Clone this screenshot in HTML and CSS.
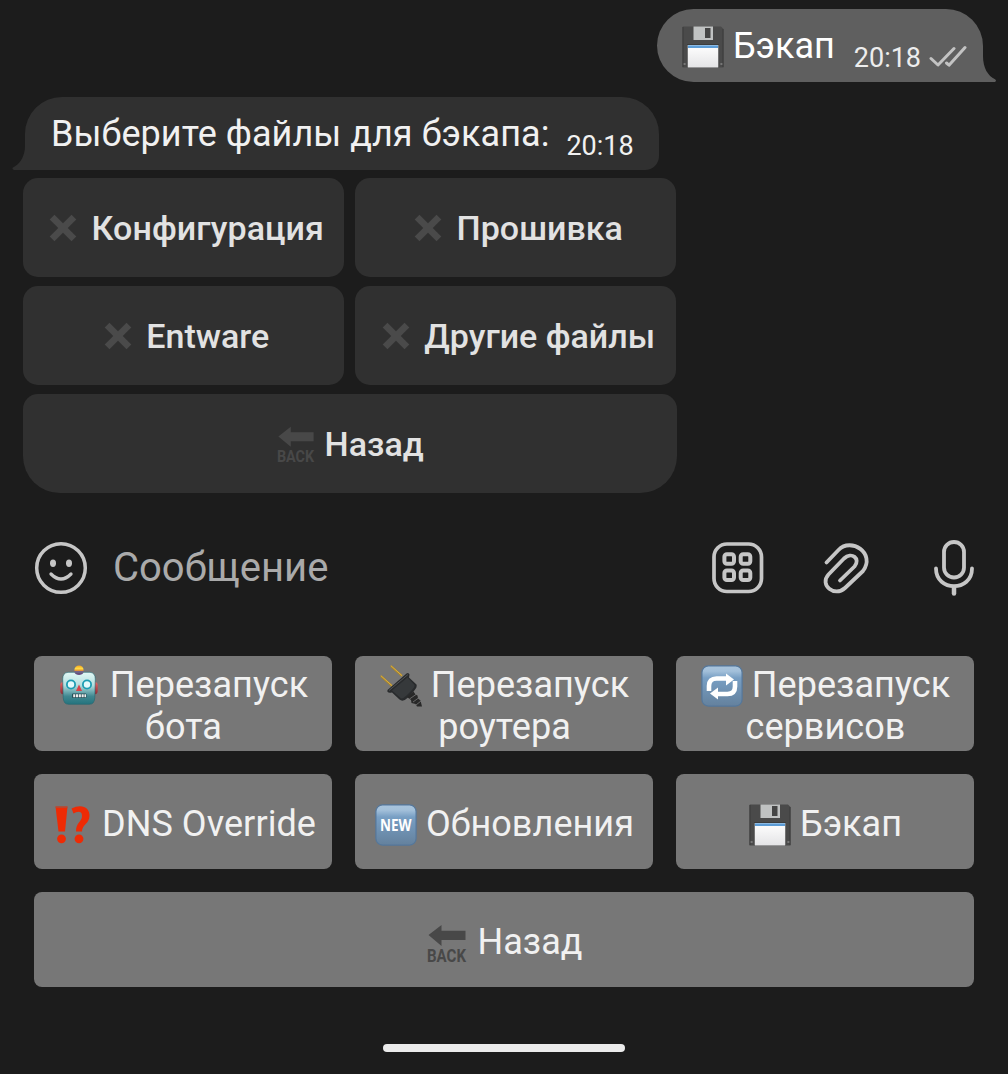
FILE: index.html
```html
<!DOCTYPE html>
<html lang="ru">
<head>
<meta charset="utf-8">
<title>Бэкап</title>
<link rel="stylesheet" href="styles.css">
</head>
<body>
<svg class="defs" aria-hidden="true">
  <defs>
    <linearGradient id="tile" x1="0" y1="0" x2="0" y2="1"><stop offset="0" stop-color="#a9c4dc"/><stop offset=".13" stop-color="#a3c0da"/><stop offset=".3" stop-color="#789fc4"/><stop offset="1" stop-color="#64819d"/></linearGradient>
    <linearGradient id="paper" x1="0" y1="0" x2="0" y2="1"><stop offset="0" stop-color="#fff"/><stop offset="1" stop-color="#e4e4e6"/></linearGradient>
    <linearGradient id="face" x1="0" y1="0" x2="0" y2="1"><stop offset="0" stop-color="#e2f8f5"/><stop offset=".4" stop-color="#b5dfdf"/><stop offset=".75" stop-color="#3f8790"/><stop offset="1" stop-color="#25737d"/></linearGradient>
    <linearGradient id="bulb" x1="0" y1="0" x2="0" y2="1"><stop offset="0" stop-color="#f5a31c"/><stop offset=".35" stop-color="#ffdc45"/><stop offset=".55" stop-color="#e99a30"/><stop offset=".6" stop-color="#8b668e"/><stop offset="1" stop-color="#66507c"/></linearGradient>
    <linearGradient id="ear" x1="0" y1="0" x2="0" y2="1"><stop offset="0" stop-color="#e86463"/><stop offset="1" stop-color="#8d2934"/></linearGradient>
  </defs>
  <symbol id="floppy" viewBox="0 0 42 42">
    <path d="M1 .5H39L41.500 3V41.500H.5V1Z" fill="#4a4a4a"/>
    <path d="M1 1V41M41 3V41" stroke="#3b3b3b"/>
    <path d="M11.500 .5H31V14H11.500Z" fill="#c0c2c2"/>
    <path d="M23 2H28.500V12H23Z" fill="#444"/>
    <path d="M5 18H37V41.500H5Z" fill="#3c3c3c"/>
    <path d="M5.700 19H36.300V41.500H5.700Z" fill="url(#paper)"/>
    <path d="M6 19.300H36V22H6Z" fill="#5c9cd6"/>
    <path d="M1.600 37H3.600V39H1.600ZM38.400 37H40.400V39H38.400Z" fill="#777"/>
  </symbol>
  <symbol id="cross" viewBox="0 0 42 42">
    <path d="M12 7 21 16 30 7 35 12 26 21 35 30 30 35 21 26 12 35 7 30 16 21 7 12Z" fill="#4a4a4a"/>
  </symbol>
  <symbol id="robot" viewBox="0 0 42 42">
    <path d="M1.300 19Q2 17 4.500 17V29.500Q1.300 29 1.300 26ZM38.700 19Q38 17 35.500 17V29.500Q38.700 29 38.700 26Z" fill="url(#ear)"/>
    <circle cx="20" cy="5" r="4.600" fill="url(#bulb)"/>
    <path d="M9 7.300H31Q36.300 7.800 36.300 14L35.800 32.500Q35.500 39.300 30.500 39.300H9.500Q4.500 39.300 4.200 32.500L3.700 14Q3.700 7.800 9 7.300Z" fill="url(#face)" stroke="#236771" stroke-width=".6"/>
    <path d="M15.400 7.300H24.600Q23.500 10 20 10T15.400 7.300Z" fill="#66507c"/>
    <circle cx="12" cy="19.500" r="5" fill="#1c9db3"/><circle cx="28" cy="19.500" r="5" fill="#1c9db3"/>
    <circle cx="12" cy="19.500" r="3.200" fill="#e4fafc"/><circle cx="28" cy="19.500" r="3.200" fill="#e4fafc"/>
    <path d="M20 19.500 23 26H17Z" fill="#d8424b"/>
    <rect x="13" y="28.500" width="14.500" height="4.500" rx="1" fill="#244d54"/>
    <path d="M14.200 30.700H27" stroke="#eee" stroke-width="3" stroke-dasharray="2.100 .7"/>
  </symbol>
  <symbol id="plug" viewBox="0 0 42 42">
    <path d="M.8 11 12 21M10.800 1 22 11" stroke="#a8852e" stroke-width="2.200" fill="none"/>
    <path d="M.8 10.600 12 20.600M10.800 .6 22 10.600" stroke="#dfb445" stroke-width=".9" fill="none"/>
    <path d="M26.500 8.500Q28.500 7 29.500 9.500L29 12.500 36.500 19.500Q37.500 22 34 26L28 32.500Q23 37.500 19.500 34.500L12 27.500Q6.500 28.500 7.500 25Z" fill="#292b2d"/>
    <path d="M12 25.500 27.500 12.500 34.500 20Q35 22 31.500 25.500L26.500 30.500Q22 35 20 32.500Z" fill="#36393b"/>
    <path d="M9 25.500 28 9.500" stroke="#505355" stroke-width="1"/>
    <path d="M27 32 33.500 26.500 35.500 29.500 37.500 30.500 38 33.500 40.500 35.500 42 41.500H37L35.500 39 31.500 38 31 35Z" fill="#282828"/>
    <path d="M29.500 34 36 29.500M33 37 38.500 33M36 40 41 36" stroke="#777" stroke-width=".8"/>
  </symbol>
  <symbol id="repeat" viewBox="0 0 42 42">
    <rect x=".9" y=".9" width="40.200" height="40.200" rx="6.500" fill="url(#tile)" stroke="#54779b" stroke-width="1.200"/>
    <path d="M8 26V21Q8 13.500 15.500 13.500H27" fill="none" stroke="#fff" stroke-width="4.600"/>
    <path d="M34 16V21.500Q34 29 26.500 29H15" fill="none" stroke="#fff" stroke-width="4.600"/>
    <path d="M25 8.500 33 14.500 25 20.500ZM17 22.500 9 28.500 17 34.500Z" fill="#fff"/>
  </symbol>
  <symbol id="interrobang" viewBox="0 0 42 42">
    <path d="M4.500 2.500H16.500L14 27.500H7.500Z" fill="#ee2b05"/>
    <path d="M4.500 2.500H16.500L16.400 3.800H4.600Z" fill="#a8503f"/>
    <circle cx="10.500" cy="34.800" r="4.400" fill="#ee2b05"/>
    <path d="M20.500 4.500Q25 2.200 29 2.200C35 2.200 38.500 6 38.500 11.500 38.500 20 31 20.500 31 27.500H25C25 18 31 18 31 12Q31 7.800 27.500 7.800 25 7.800 22.500 9.500Z" fill="#ee2b05"/>
    <circle cx="28" cy="34.800" r="4.400" fill="#ee2b05"/>
  </symbol>
</svg>

<main class="chat">
  <div class="message message-out">
    <svg class="bubble" width="340" height="73" viewBox="0 0 340 73"><path d="M37 0H290A37 37 0 0 1 327 37V47C327 59 332 67 339 70.200Q341 71.500 339 73H37.500A36.500 36.500 0 0 1 37.500 0Z" fill="#5f5f5f"/></svg>
    <span class="text"><svg class="emoji"><use href="#floppy"/></svg> Бэкап</span>
    <span class="time">20:18</span>
    <svg class="checks" width="38" height="24" viewBox="0 0 38 24"><path d="M2 13.500 9 20 25 3.500M17.500 18 20 20.200 36 2.500" fill="none" stroke="#c3c3c3" stroke-width="3" stroke-linecap="round" stroke-linejoin="round"/></svg>
  </div>
  <div class="message message-in">
    <svg class="bubble" width="648" height="73" viewBox="0 0 648 73"><path d="M50 0H610A37 37 0 0 1 647 37V59A14 14 0 0 1 633 73H2Q-.8 71.500 1.500 70.200C8 67 13 59 13 49V37A37 37 0 0 1 50 0Z" fill="#303030"/></svg>
    <span class="text">Выберите файлы для бэкапа:</span>
    <span class="time">20:18</span>
  </div>
  <div class="actions">
    <div class="action action-tight"><span><svg class="emoji"><use href="#cross"/></svg> Конфигурация</span></div>
    <div class="action"><span><svg class="emoji"><use href="#cross"/></svg> Прошивка</span></div>
    <div class="action"><span><svg class="emoji"><use href="#cross"/></svg> Entware</span></div>
    <div class="action"><span><svg class="emoji"><use href="#cross"/></svg> Другие файлы</span></div>
    <div class="action action-wide"><span><svg class="emoji" viewBox="0 0 42 42"><path d="M2.500 13 15.500 3V8.700H39.500V18H15.500V24Z" fill="#484848"/><text x="1" y="39.800" textLength="39" lengthAdjust="spacingAndGlyphs" class="back-word">BACK</text></svg> Назад</span></div>
  </div>
</main>

<div class="composer">
  <svg width="54" height="54" viewBox="0 0 54 54"><circle cx="27" cy="27" r="24.300" fill="none" stroke="#c6c6c6" stroke-width="3.500"/><ellipse cx="19" cy="22.300" rx="3" ry="3.700" fill="#c6c6c6"/><ellipse cx="35" cy="22.300" rx="3" ry="3.700" fill="#c6c6c6"/><path d="M17 33Q27 43 37 33" fill="none" stroke="#c6c6c6" stroke-width="3.300" stroke-linecap="round"/></svg>
  <span class="placeholder">Сообщение</span>
  <svg class="commands" width="52" height="52" viewBox="0 0 52 52" fill="none" stroke="#c6c6c6"><rect x="2" y="2" width="47.500" height="47.500" rx="13" stroke-width="3.700"/><g stroke-width="4"><rect x="12.400" y="12.200" width="9.600" height="9.600" rx="2.500"/><rect x="28.700" y="12.200" width="9.600" height="9.600" rx="2.500"/><rect x="12.400" y="28.500" width="9.600" height="9.600" rx="2.500"/><rect x="28.700" y="28.500" width="9.600" height="9.600" rx="2.500"/></g></svg>
  <svg class="attach" width="48" height="54" viewBox="0 0 48 54"><path d="M3.500 21.500 15.500 9C28 -4 53 12 40 30L22 47C11.500 56.500 -4 44 5.500 33.500L21 17.500C28.500 10.500 38 17.500 31.500 25.500L17 39.500" fill="none" stroke="#c6c6c6" stroke-width="3.800" stroke-linecap="round" stroke-linejoin="round"/></svg>
  <svg class="mic" width="42" height="58" viewBox="0 0 42 58" fill="none" stroke="#c6c6c6" stroke-width="3.800" stroke-linecap="round"><rect x="11" y="3" width="20" height="35.500" rx="10"/><path d="M3 29.500C3 53 39 53 39 29.500"/><path d="M21 48V54.500" stroke-width="4.500"/></svg>
</div>

<div class="keyboard">
  <div class="key"><span><svg class="emoji"><use href="#robot"/></svg> Перезапуск<br>бота</span></div>
  <div class="key"><span><svg class="emoji"><use href="#plug"/></svg> Перезапуск<br>роутера</span></div>
  <div class="key"><span><svg class="emoji"><use href="#repeat"/></svg> Перезапуск<br>сервисов</span></div>
  <div class="key"><span><svg class="emoji"><use href="#interrobang"/></svg> DNS Override</span></div>
  <div class="key"><span><svg class="emoji" viewBox="0 0 42 42"><rect x=".9" y=".9" width="40.200" height="40.200" rx="6.500" fill="url(#tile)" stroke="#54779b" stroke-width="1.200"/><text x="5" y="27.200" textLength="31.500" lengthAdjust="spacingAndGlyphs" class="new-word">NEW</text></svg> Обновления</span></div>
  <div class="key"><span><svg class="emoji"><use href="#floppy"/></svg> Бэкап</span></div>
  <div class="key key-wide"><span><svg class="emoji" viewBox="0 0 42 42"><path d="M2.500 13 15.500 3V8.700H39.500V18H15.500V24Z" fill="#484848"/><text x="1" y="39.800" textLength="39" lengthAdjust="spacingAndGlyphs" class="back-word">BACK</text></svg> Назад</span></div>
</div>
<div class="home-bar"></div>
</body>
</html>
```
FILE: styles.css
```css
* {
  box-sizing: border-box;
}

body {
  margin: 0;
  height: 1074px;
  display: flex;
  flex-direction: column;
  overflow: hidden;
  background: #1c1c1c;
  color: #f1f1f1;
  font: 36px/42px Roboto, sans-serif;
}

.defs {
  position: absolute;
  width: 0;
  height: 0;
}

.back-word {
  font: bold 18px Roboto, sans-serif;
  letter-spacing: 0;
  fill: #484848;
}

.new-word {
  font: bold 16px "Open Sans", sans-serif;
  letter-spacing: 0;
  fill: #fff;
}

.emoji {
  width: 42px;
  height: 42px;
  margin-bottom: -2px;
  vertical-align: -8px;
  overflow: visible;
}

.chat {
  display: flex;
  flex-direction: column;
  padding-top: 9px;
}

.message {
  position: relative;
  display: flex;
  height: 73px;
  white-space: nowrap;
}

.bubble {
  position: absolute;
  left: 0;
  top: 0;
  z-index: -1;
}

.message-out {
  align-self: flex-end;
  width: 340px;
  margin-right: 12px;
  padding: 16px 0 0 26px;
  color: #fff;
}

.message-in {
  width: 648px;
  margin: 15px 0 8px 12px;
  padding: 16px 0 0 39px;
}

.message-in .text {
  letter-spacing: .05px;
}

.time {
  font-size: 27px;
  line-height: 30px;
  margin-top: 18px;
}

.message-out .time {
  margin-left: 19px;
  color: #ededed;
}

.message-in .time {
  margin-left: 17px;
}

.checks {
  margin: 20px 0 0 8px;
}

.actions {
  display: grid;
  grid-template-columns: 321px 321px;
  grid-auto-rows: 99px;
  gap: 9px 11px;
  margin-left: 23px;
}

.action {
  display: flex;
  align-items: center;
  justify-content: center;
  border-radius: 15px;
  background: #303030;
  color: #e2e2e2;
  font-size: 34px;
  font-weight: 500;
  white-space: nowrap;
}

.action .emoji {
  width: 40px;
  height: 40px;
  margin: -2px 0 0;
  vertical-align: -8px;
}

.action-tight {
  letter-spacing: .1px;
}

.action-wide {
  grid-column: 1 / 3;
  width: 654px;
  border-radius: 15px 15px 37px 37px;
}

.composer {
  display: flex;
  align-items: center;
  height: 116px;
  margin-top: 17px;
  padding-left: 34px;
}

.placeholder {
  width: 599px;
  margin: -1px 0 0 25px;
  font-size: 40px;
  color: #aaa;
}

.attach {
  margin: -1px 0 0 59px;
}

.mic {
  margin-left: 62px;
}

.keyboard {
  display: grid;
  grid-template-columns: repeat(3, 298px);
  grid-auto-rows: 95px;
  gap: 23px;
  margin: 30px 0 0 34px;
}

.key {
  display: flex;
  align-items: center;
  justify-content: center;
  padding: 5px 0 0 1px;
  border-radius: 8px;
  background: #777;
  text-align: center;
  letter-spacing: .06px;
  white-space: nowrap;
}

.key-wide {
  grid-column: 1 / 4;
}

.home-bar {
  width: 242px;
  height: 8px;
  margin: 57px auto 0;
  border-radius: 4px;
  background: #ebebeb;
}
```
